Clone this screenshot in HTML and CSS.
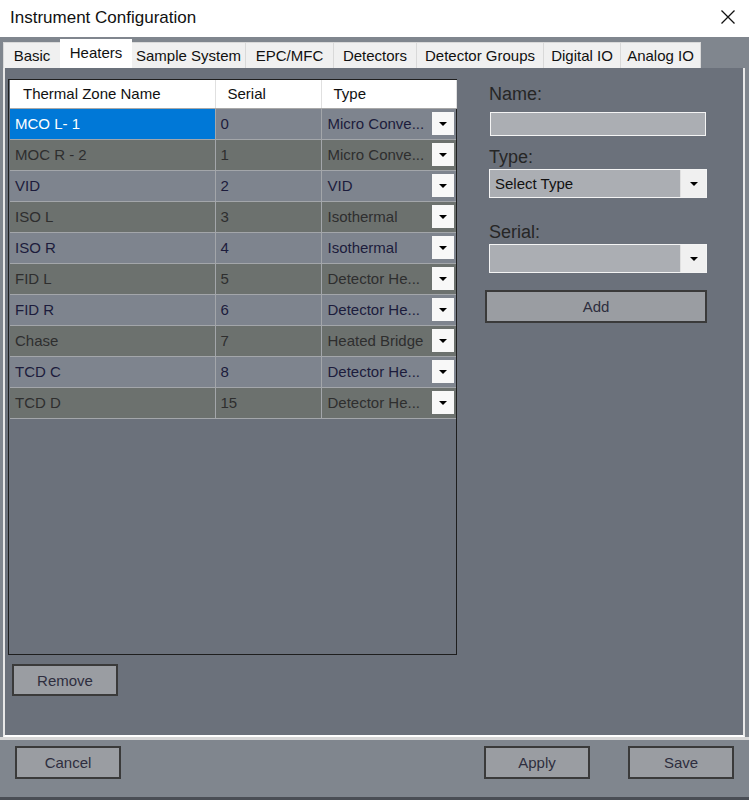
FILE: index.html
```html
<!DOCTYPE html>
<html lang="en">
  <head>
    <meta charset="UTF-8" />
    <link rel="stylesheet" href="styles.css">
    <title>Instrument Configuration</title>
  </head>
  <body>
    <div class="window">
      <div class="titlebar">
        <span class="title">Instrument Configuration</span>
        <span class="close">
          <svg width="16" height="16" viewBox="0 0 16 16"><path d="M1.5 1.5 L14.5 14.5 M14.5 1.5 L1.5 14.5" stroke="#111" stroke-width="1.3" fill="none"/></svg>
        </span>
      </div>

      <div class="tabs">
        <div class="tab t-basic">Basic</div>
        <div class="tab t-heaters active">Heaters</div>
        <div class="tab t-sample">Sample System</div>
        <div class="tab t-epc">EPC/MFC</div>
        <div class="tab t-det">Detectors</div>
        <div class="tab t-groups">Detector Groups</div>
        <div class="tab t-dio">Digital IO</div>
        <div class="tab t-aio">Analog IO</div>
      </div>

      <div class="page">
        <div class="left">
          <div class="grid">
            <table>
              <thead>
                <tr>
                  <th class="c-name">Thermal Zone Name</th>
                  <th class="c-serial">Serial</th>
                  <th class="c-type">Type</th>
                </tr>
              </thead>
              <tbody>
                <tr class="odd"><td class="selected">MCO L- 1</td><td>0</td><td><div class="combo"><span>Micro Conve...</span><i class="drop"></i></div></td></tr>
                <tr class="even"><td>MOC R - 2</td><td>1</td><td><div class="combo"><span>Micro Conve...</span><i class="drop"></i></div></td></tr>
                <tr class="odd"><td>VID</td><td>2</td><td><div class="combo"><span>VID</span><i class="drop"></i></div></td></tr>
                <tr class="even"><td>ISO L</td><td>3</td><td><div class="combo"><span>Isothermal</span><i class="drop"></i></div></td></tr>
                <tr class="odd"><td>ISO R</td><td>4</td><td><div class="combo"><span>Isothermal</span><i class="drop"></i></div></td></tr>
                <tr class="even"><td>FID L</td><td>5</td><td><div class="combo"><span>Detector He...</span><i class="drop"></i></div></td></tr>
                <tr class="odd"><td>FID R</td><td>6</td><td><div class="combo"><span>Detector He...</span><i class="drop"></i></div></td></tr>
                <tr class="even"><td>Chase</td><td>7</td><td><div class="combo"><span>Heated Bridge</span><i class="drop"></i></div></td></tr>
                <tr class="odd"><td>TCD C</td><td>8</td><td><div class="combo"><span>Detector He...</span><i class="drop"></i></div></td></tr>
                <tr class="even"><td>TCD D</td><td>15</td><td><div class="combo"><span>Detector He...</span><i class="drop"></i></div></td></tr>
              </tbody>
            </table>
          </div>
          <button class="btn remove">Remove</button>
        </div>

        <div class="right">
          <label class="label">Name:</label>
          <div class="textbox"></div>

          <label class="label">Type:</label>
          <div class="select"><span>Select Type</span><i class="drop"></i></div>

          <label class="label serial">Serial:</label>
          <div class="select"><span></span><i class="drop"></i></div>

          <button class="btn add">Add</button>
        </div>
      </div>

      <div class="footer">
        <button class="btn">Cancel</button>
        <div class="spacer"></div>
        <button class="btn">Apply</button>
        <button class="btn">Save</button>
      </div>
    </div>
  </body>
</html>
```

FILE: styles.css
```css
body {
  margin: 0px;
  padding: 0px;
  font-family: "Liberation Sans", Arial, sans-serif;
  background-color: #80868e;
}

.window {
  width: 749px;
  height: 800px;
  display: flex;
  flex-direction: column;
  overflow: hidden;
}

/* title bar */
.titlebar {
  height: 37px;
  background-color: #ffffff;
  display: flex;
  align-items: center;
  justify-content: space-between;
  padding: 0px 13px 0px 10px;
}

.titlebar .title {
  font-size: 17px;
  color: #111;
  margin-top: -2px;
}

.titlebar .close {
  display: flex;
  margin-top: -4px;
}

/* tab strip */
.tabs {
  height: 31px;
  background-color: #80868e;
  display: flex;
  align-items: flex-end;
  padding-left: 3px;
}

.tab {
  box-sizing: border-box;
  height: 26px;
  line-height: 25px;
  text-align: center;
  font-size: 15px;
  color: #111;
  background-color: #f0f0f0;
  border: 1px solid #d9d9d9;
  border-bottom: none;
  margin-right: -1px;
  white-space: nowrap;
}

.tab.active {
  height: 29px;
  line-height: 25px;
  background-color: #ffffff;
  border-color: #ffffff;
  position: relative;
  z-index: 1;
}

/* tab widths follow the WinForms tab control */
.t-basic { width: 58px; }
.t-heaters { width: 72px; }
.t-sample { width: 115px; }
.t-epc { width: 89px; }
.t-det { width: 84px; }
.t-groups { width: 128px; }
.t-dio { width: 78px; }
.t-aio { width: 81px; }

/* tab page */
.page {
  height: 656px;
  margin: 0px 4px 0px 3px;
  background-color: #6b717b;
  border-left: 2px solid #e8e8e8;
  border-right: 2px solid #e8e8e8;
  border-bottom: 2px solid #ffffff;
  display: flex;
  padding: 11px 0px 0px 3px;
}

.left {
  width: 449px;
  display: flex;
  flex-direction: column;
}

.grid {
  box-sizing: border-box;
  height: 576px;
  border: 1px solid #1e1e1e;
  padding: 0px 0px 0px 1px;
  background-color: #6b717b;
}

.grid table {
  border-collapse: collapse;
  width: 446px;
  table-layout: fixed;
  font-size: 15px;
}

.grid th,
.grid td {
  box-sizing: border-box;
}

.grid th {
  height: 28px;
  background-color: #ffffff;
  color: #111;
  font-weight: normal;
  text-align: left;
  border-right: 1px solid #e0e0e0;
  border-bottom: 1px solid #a8a8a8;
  padding: 0px 0px 0px 12px;
}

.grid .c-name { width: 205px; padding-left: 13px; }
.grid .c-serial { width: 106px; }
.grid .c-type { width: 135px; }

.grid td {
  height: 31px;
  padding: 0px 0px 0px 5px;
  border-right: 1px solid #a3a6aa;
  border-bottom: 1px solid #a3a6aa;
  white-space: nowrap;
  overflow: hidden;
}

.grid tr.odd td {
  background-color: #7e848e;
  color: #1c1c3c;
}

.grid tr.even td {
  background-color: #6c716e;
  color: #2e2e2e;
}

.grid tr.odd td.selected {
  background-color: #0078d7;
  color: #ffffff;
}

.grid td:nth-child(3) { padding-left: 6px; border-right: none; }

.combo {
  display: flex;
  align-items: center;
  justify-content: space-between;
}

.combo .drop {
  width: 22px;
  height: 23px;
  margin-right: 2px;
  background-color: #f8f8f8;
}

/* small black arrow used by every drop-down */
.drop {
  display: flex;
  align-items: center;
  justify-content: center;
  flex-shrink: 0;
}

.drop::after {
  content: "";
  border-left: 4px solid transparent;
  border-right: 4px solid transparent;
  border-top: 4px solid #000;
}

/* form on the right */
.right {
  width: 222px;
  margin-left: 28px;
  display: flex;
  flex-direction: column;
}

.label {
  font-size: 18px;
  color: #262626;
  margin-left: 4px;
  line-height: 20px;
  margin-top: 5px;
}

.textbox {
  margin: 8px 0px 6px 5px;
  height: 22px;
  width: 214px;
  background-color: #abaeb3;
  border: 1px solid #f4f4f4;
}

.select {
  margin: 2px 0px 0px 4px;
  height: 27px;
  width: 216px;
  background-color: #abaeb3;
  border: 1px solid #f4f4f4;
  display: flex;
  align-items: center;
  justify-content: space-between;
  font-size: 15px;
  color: #111;
}

.select span {
  padding-left: 5px;
}

.select .drop {
  width: 25px;
  height: 27px;
  background-color: #f0f0f0;
  border-left: 1px solid #e0e0e0;
}

.label.serial {
  margin-top: 24px;
}

.btn {
  font-family: "Liberation Sans", Arial, sans-serif;
  font-size: 15px;
  color: #2e2e3e;
  background-color: #9a9da2;
  border: 2px solid #3a3a3a;
  height: 33px;
  width: 106px;
  padding: 0px;
}

.btn.add {
  width: 222px;
  height: 33px;
  margin-top: 17px;
  background-color: #9a9da2;
}

.btn.remove {
  margin: 9px 0px 0px 4px;
  width: 106px;
  height: 32px;
}

/* bottom buttons */
.footer {
  flex: 1;
  border-top: 3px solid #d6d6d6;
  background-color: #80868e;
  border-bottom: 3px solid #4a4e55;
  display: flex;
  align-items: flex-start;
  padding: 6px 15px 0px 15px;
  gap: 38px;
}

.footer .spacer {
  flex: 1;
}
```
